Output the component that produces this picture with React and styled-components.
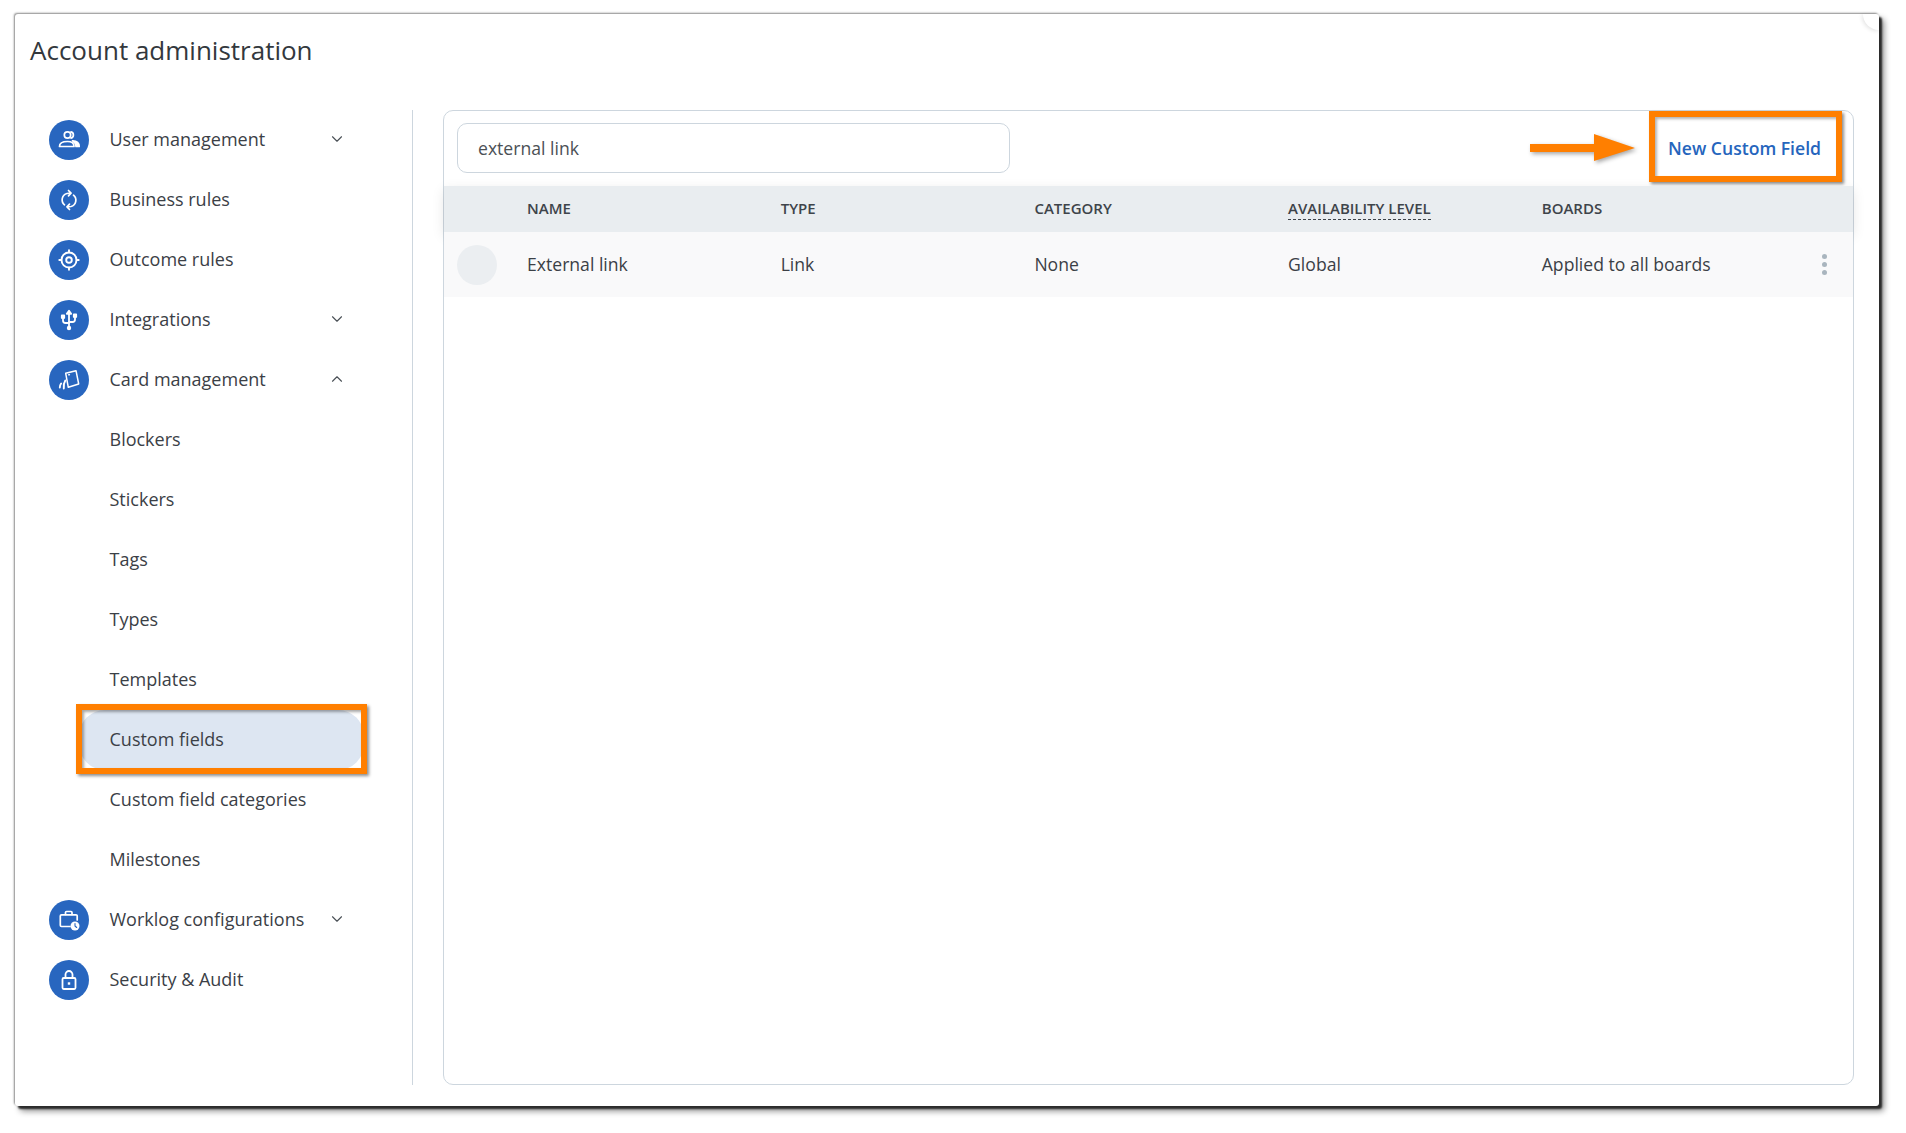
import React from "react";
import styled, { createGlobalStyle } from "styled-components";
import { ChevronDown, ChevronUp } from "lucide-react";

const GlobalStyle = createGlobalStyle`
  html, body {
    margin: 0;
    height: 100%;
    background: #fff;
    overflow: hidden;
  }
  * {
    box-sizing: border-box;
  }
  body {
    font-family: "Open Sans", "Noto Sans", sans-serif;
    color: #3b4046;
  }
`;

const Page = styled.div`
  height: 1133px;
  padding: 14px 27px 27px 15px;
`;

const Card = styled.div`
  position: relative;
  height: 1092px;
  background: #fff;
  border-radius: 3px;
  box-shadow: 3px 3px 2px #2b2b2b, 5px 5px 6px rgba(0, 0, 0, 0.45),
    -1px -1px 2px rgba(0, 0, 0, 0.45);
  padding: 19px 0 0 15px;
  &::after {
    content: "";
    position: absolute;
    top: 0;
    right: 0;
    width: 16px;
    height: 16px;
    border-bottom-left-radius: 16px;
    box-shadow: -1px 1px 4px rgba(0, 0, 0, 0.12);
  }
`;

const Title = styled.h1`
  margin: 0;
  height: 46px;
  font-size: 26px;
  line-height: 34px;
  font-weight: 400;
  color: #33383d;
`;

const Columns = styled.div`
  display: flex;
  margin-left: -15px;
  margin-top: 31px;
`;

const Sidebar = styled.nav`
  width: 398px;
  height: 975px;
  padding-left: 34px;
  border-right: 1px solid #cdd6de;
  flex-shrink: 0;
`;

const NavRow = styled.div`
  display: flex;
  align-items: center;
  height: 60px;
  font-size: 18px;
  width: 305px;
`;

const IconCircle = styled.span`
  width: 40px;
  height: 40px;
  border-radius: 50%;
  background: #2866bf;
  color: #fff;
  display: flex;
  align-items: center;
  justify-content: center;
  flex-shrink: 0;
  margin-right: 20.5px;
`;

const NavLabel = styled.span`
  flex: 1;
  margin-top: -2px;
`;

const Chevron = styled.span`
  display: flex;
  color: #4a5056;
  margin-right: 8px;
  margin-top: -2px;
`;

const SubRow = styled.div`
  position: relative;
  display: flex;
  align-items: center;
  height: 60px;
  padding-left: 60.5px;
  font-size: 18px;
`;

const ActivePill = styled.span`
  position: absolute;
  left: 30px;
  top: 0;
  width: 285px;
  height: 60px;
  border-radius: 26px;
  background: #dde6f2;
`;

const SubLabel = styled.span`
  position: relative;
  margin-top: -2px;
`;

const Callout = styled.span`
  position: absolute;
  left: 27px;
  top: -6px;
  width: 291px;
  height: 70px;
  border: 6px solid #ff7f00;
  box-shadow: 2px 2px 3px rgba(0, 0, 0, 0.45),
    inset 2px 2px 3px rgba(0, 0, 0, 0.35);
`;

const Panel = styled.section`
  width: 1411px;
  height: 975px;
  margin-left: 30px;
  border: 1px solid #cdd6de;
  border-radius: 10px;
`;

const Toolbar = styled.div`
  display: flex;
  align-items: flex-start;
  height: 75px;
  padding: 0 11px 0 13px;
`;

const SearchBox = styled.div`
  width: 553px;
  height: 50px;
  margin-top: 12px;
  padding: 0 0 1px 20px;
  display: flex;
  align-items: center;
  border: 1px solid #cdd6de;
  border-radius: 10px;
  font-size: 17.6px;
  color: #4b5055;
`;

const Arrow = styled.svg`
  margin-left: auto;
  margin-top: 23px;
  margin-right: 14px;
  overflow: visible;
  filter: drop-shadow(2px 2px 2px rgba(0, 0, 0, 0.35));
`;

const NewButton = styled.div`
  width: 193px;
  height: 71px;
  border: 6px solid #ff7f00;
  box-shadow: 2px 2px 3px rgba(0, 0, 0, 0.45),
    inset 2px 2px 3px rgba(0, 0, 0, 0.3);
  display: flex;
  align-items: center;
  justify-content: center;
  padding: 2px 2px 0 0;
  font-size: 17.6px;
  font-weight: 600;
  color: #2565bd;
  position: relative;
  background: #fff;
`;

const TableHead = styled.div`
  position: relative;
  display: grid;
  grid-template-columns: 83px repeat(5, 253.7px);
  align-items: center;
  height: 46px;
  padding-bottom: 2px;
  background: #e9edf0;
  font-size: 15px;
  font-weight: 600;
  color: #3e444a;
  box-shadow: 0 4px 12px rgba(0, 0, 0, 0.1);
`;

const HeadCell = styled.div`
  text-transform: uppercase;
`;

const Dashed = styled.span`
  border-bottom: 1px dashed #3e444a;
  padding-bottom: 1px;
`;

const TableRow = styled.div`
  position: relative;
  display: grid;
  grid-template-columns: 83px repeat(5, 253.7px);
  align-items: center;
  height: 65px;
  background: #f9f9fa;
  font-size: 17.6px;
`;

const Avatar = styled.span`
  width: 40px;
  height: 40px;
  margin-left: 13px;
  border-radius: 50%;
  background: #ebeef1;
`;

const Cell = styled.div`
  margin-top: -2px;
`;

const MoreDots = styled.span`
  position: absolute;
  right: 26px;
  top: 50%;
  margin-top: -11px;
  display: flex;
  flex-direction: column;
  gap: 3px;
  i {
    width: 5px;
    height: 5px;
    border-radius: 50%;
    background: #a9b5be;
  }
`;

const iconProps = {
  width: 24,
  height: 24,
  viewBox: "0 0 24 24",
  fill: "none",
  stroke: "currentColor",
  strokeWidth: 1.7,
  strokeLinecap: "round",
  strokeLinejoin: "round",
};

const UsersIcon = () => (
  <svg {...iconProps}>
    <circle cx="10.5" cy="7" r="3.2" />
    <path d="M14 3.9a3.2 3.2 0 0 1 0 6.2" />
    <path d="M2.5 18.5c0-3.5 3.5-5 8-5s6.500 1.500 6.500 5z" />
    <path d="M15.500 12.800c4 .2 6.700 2 6.700 5.700h-3.200c0-2.300-1.200-4.200-3.500-5.700z" fill="currentColor" />
  </svg>
);

const CycleIcon = () => (
  <svg {...iconProps}>
    <path d="M7.500 16.800A6.500 6.500 0 0 1 10 5.500l3.500-.3" />
    <path d="M11.500 2.500l2.500 2.700-2.500 2.600" />
    <path d="M16.500 7.200A6.500 6.500 0 0 1 14 18.500l-3.500.3" />
    <path d="M12.500 21.500L10 18.800l2.500-2.600" />
  </svg>
);

const TargetIcon = () => (
  <svg {...iconProps} strokeWidth="1.900">
    <circle cx="12" cy="12" r="7.500" />
    <circle cx="12" cy="12" r="2.800" />
    <path d="M12 2.300v2M12 19.700v2M2.300 12h2M19.700 12h2" />
  </svg>
);

const UsbIcon = () => (
  <svg {...iconProps} strokeWidth="1.800">
    <path d="M12 3.500v17" />
    <path d="M9.800 5.800L12 2.800l2.200 3z" fill="currentColor" />
    <circle cx="12" cy="20" r="1.300" fill="currentColor" />
    <path d="M6 10v2.500c0 1.500 1 2.500 2.500 2.500H12" />
    <path d="M18 9v2.500c0 1.500-1 2.500-2.500 2.500H12" />
    <rect x="4.800" y="7.500" width="2.400" height="2.400" fill="currentColor" />
    <rect x="16.800" y="6.500" width="2.400" height="2.400" fill="currentColor" />
  </svg>
);

const CardIcon = () => (
  <svg {...iconProps} strokeWidth="1.500">
    <path d="M8.700 5.300L19 2.700l2.700 13.300-10.400 3.300z" />
    <path d="M11.800 6.800l.6-.1" />
    <path d="M2.800 19.500c0-1.500.4-2.800 1.300-4" strokeWidth="1.900" />
    <path d="M6.800 20.500c-.4-3 .1-5.800 1.500-8" strokeWidth="1.900" />
  </svg>
);

const WorklogIcon = () => (
  <svg {...iconProps}>
    <path d="M13 18.500H4.500a1.200 1.200 0 0 1-1.200-1.200V8a1.200 1.200 0 0 1 1.200-1.200h14.500A1.200 1.200 0 0 1 20.200 8v4" />
    <path d="M8.500 6.500v-2a1 1 0 0 1 1-1h4.500a1 1 0 0 1 1 1v2" />
    <circle cx="18" cy="18" r="4.500" fill="currentColor" stroke="none" />
    <path d="M18 15.500V18l1.700 1.500" stroke="#2866bf" strokeWidth="1.100" />
  </svg>
);

const LockIcon = () => (
  <svg {...iconProps} strokeWidth="1.800">
    <rect x="5.500" y="10" width="13" height="11" rx="1.200" />
    <path d="M8.500 10V6.500a3.500 3.500 0 0 1 7 0V10" />
    <rect x="10.800" y="14.300" width="2.400" height="2.400" fill="currentColor" stroke="none" />
  </svg>
);

const NavItem = ({ icon, label, chevron }) => (
  <NavRow>
    <IconCircle>{icon}</IconCircle>
    <NavLabel>{label}</NavLabel>
    {chevron === "down" && (
      <Chevron>
        <ChevronDown size={18} strokeWidth={1.5} />
      </Chevron>
    )}
    {chevron === "up" && (
      <Chevron>
        <ChevronUp size={18} strokeWidth={1.5} />
      </Chevron>
    )}
  </NavRow>
);

const subItems = [
  "Blockers",
  "Stickers",
  "Tags",
  "Types",
  "Templates",
  "Custom fields",
  "Custom field categories",
  "Milestones",
];

const columns = ["Name", "Type", "Category", "Availability level", "Boards"];

export default function App() {
  return (
    <>
      <GlobalStyle />
      <Page>
        <Card>
          <Title>Account administration</Title>
          <Columns>
            <Sidebar>
              <NavItem icon={<UsersIcon />} label="User management" chevron="down" />
              <NavItem icon={<CycleIcon />} label="Business rules" />
              <NavItem icon={<TargetIcon />} label="Outcome rules" />
              <NavItem icon={<UsbIcon />} label="Integrations" chevron="down" />
              <NavItem icon={<CardIcon />} label="Card management" chevron="up" />
              {subItems.map((item) => (
                <SubRow key={item}>
                  {item === "Custom fields" && <ActivePill />}
                  <SubLabel>{item}</SubLabel>
                  {item === "Custom fields" && <Callout />}
                </SubRow>
              ))}
              <NavItem icon={<WorklogIcon />} label="Worklog configurations" chevron="down" />
              <NavItem icon={<LockIcon />} label="Security & Audit" />
            </Sidebar>
            <Panel>
              <Toolbar>
                <SearchBox>external link</SearchBox>
                <Arrow width="105" height="30" viewBox="0 0 105 30">
                  <path d="M0 10H64V0L105 14 64 27V18H0z" fill="#ff7f00" />
                </Arrow>
                <NewButton>New Custom Field</NewButton>
              </Toolbar>
              <TableHead>
                <span />
                {columns.map((col) => (
                  <HeadCell key={col}>
                    {col === "Availability level" ? <Dashed>{col}</Dashed> : col}
                  </HeadCell>
                ))}
              </TableHead>
              <TableRow>
                <Avatar />
                <Cell>External link</Cell>
                <Cell>Link</Cell>
                <Cell>None</Cell>
                <Cell>Global</Cell>
                <Cell>Applied to all boards</Cell>
                <MoreDots>
                  <i />
                  <i />
                  <i />
                </MoreDots>
              </TableRow>
            </Panel>
          </Columns>
        </Card>
      </Page>
    </>
  );
}
